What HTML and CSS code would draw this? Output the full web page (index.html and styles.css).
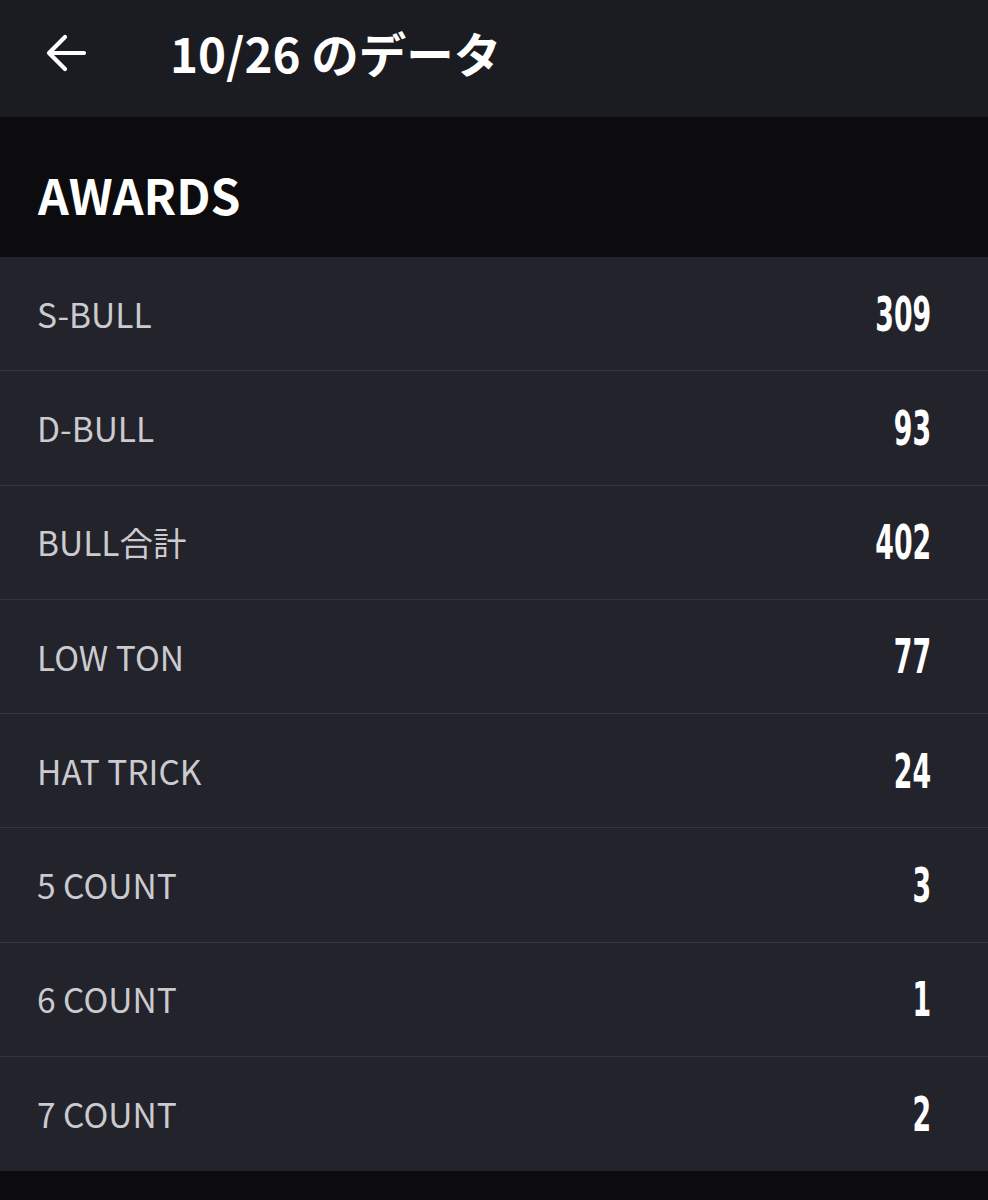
FILE: index.html
```html
<!DOCTYPE html>
<html lang="ja">
<head>
<meta charset="utf-8">
<link rel="stylesheet" href="styles.css">
</head>
<body>
<header class="topbar">
  <svg class="back" width="44" height="40" viewBox="0 0 44 40"><path d="M40 20H6M21 4L5 20l16 16" fill="none" stroke="#ffffff" stroke-width="4.2" stroke-linecap="round" stroke-linejoin="round"/></svg>
  <h1 class="title">10/26 のデータ</h1>
</header>
<section class="section-head"><h2>AWARDS</h2></section>
<ul class="list">
  <li class="row"><span class="label">S-BULL</span><span class="num"><span>309</span></span></li>
  <li class="row"><span class="label">D-BULL</span><span class="num"><span>93</span></span></li>
  <li class="row"><span class="label">BULL合計</span><span class="num"><span>402</span></span></li>
  <li class="row"><span class="label">LOW TON</span><span class="num"><span>77</span></span></li>
  <li class="row"><span class="label">HAT TRICK</span><span class="num"><span>24</span></span></li>
  <li class="row"><span class="label">5 COUNT</span><span class="num"><span>3</span></span></li>
  <li class="row"><span class="label">6 COUNT</span><span class="num"><span>1</span></span></li>
  <li class="row"><span class="label">7 COUNT</span><span class="num"><span>2</span></span></li>
</ul>
</body>
</html>
```
FILE: styles.css
```css
html, body {
  margin: 0;
  padding: 0;
  background: #0c0c0f;
}
body {
  font-family: "Noto Sans CJK JP", "Noto Sans", sans-serif;
  color: #ffffff;
}
.topbar {
  height: 117px;
  background: #1b1c21;
  display: flex;
  align-items: center;
  box-sizing: border-box;
  padding: 0 0 12px 44px;
}
.back {
  display: block;
  flex: none;
}
.title {
  margin: 0 0 0 82px;
  font-family: "Noto Sans CJK JP", sans-serif;
  font-weight: 700;
  font-size: 47.5px;
  line-height: 1;
  color: #ffffff;
}
.section-head {
  height: 140px;
  background: #0c0c0f;
  display: flex;
  align-items: center;
  box-sizing: border-box;
  padding: 14px 0 0 38px;
}
.section-head h2 {
  margin: 0;
  font-family: "Noto Sans CJK JP", sans-serif;
  font-weight: 700;
  font-size: 48px;
  line-height: 1;
  color: #ffffff;
}
.list {
  list-style: none;
  margin: 0;
  padding: 0;
}
.row {
  height: 113.25px;
  background: #23232c;
  border-bottom: 1px solid #363642;
  display: flex;
  align-items: center;
  justify-content: space-between;
  padding: 0 57px 0 37px;
}
.row:last-child {
  border-bottom: none;
  height: 114.25px;
}
.label {
  font-family: "Noto Sans CJK JP", sans-serif;
  font-size: 33.5px;
  color: #cbcbcf;
  line-height: 1;
}
.num {
  display: block;
}
.num span {
  display: inline-block;
  font-family: "DejaVu Sans Condensed", "DejaVu Sans", sans-serif;
  font-weight: 700;
  font-size: 48px;
  line-height: 1;
  color: #ffffff;
  transform: scaleX(0.62);
  transform-origin: right center;
}
```
